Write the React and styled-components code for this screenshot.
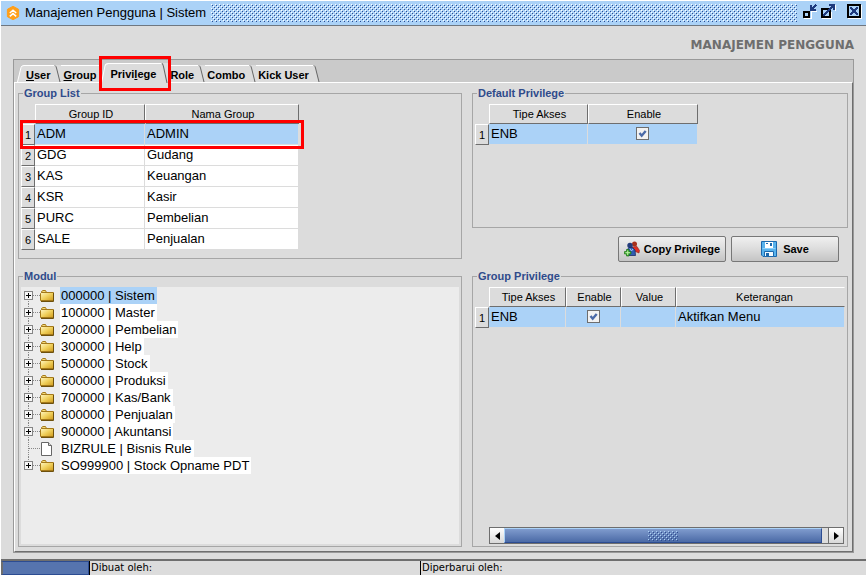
import { useState } from "react";
import styled, { createGlobalStyle, css } from "styled-components";

const groups = [
  { id: "ADM", name: "ADMIN" },
  { id: "GDG", name: "Gudang" },
  { id: "KAS", name: "Keuangan" },
  { id: "KSR", name: "Kasir" },
  { id: "PURC", name: "Pembelian" },
  { id: "SALE", name: "Penjualan" },
];

const modules = [
  { label: "000000 | Sistem" },
  { label: "100000 | Master" },
  { label: "200000 | Pembelian" },
  { label: "300000 | Help" },
  { label: "500000 | Stock" },
  { label: "600000 | Produksi" },
  { label: "700000 | Kas/Bank" },
  { label: "800000 | Penjualan" },
  { label: "900000 | Akuntansi" },
  { label: "BIZRULE | Bisnis Rule", leaf: true },
  { label: "SO999900 | Stock Opname PDT" },
];

// mnemonic = index of the underlined letter
const tabs = [
  { label: "User", mnemonic: 0 },
  { label: "Group", mnemonic: 0 },
  { label: "Privilege", mnemonic: 5 },
  { label: "Role" },
  { label: "Combo" },
  { label: "Kick User" },
];

const AppIcon = () => (
  <svg width="14" height="14" viewBox="0 0 14 14" aria-hidden="true">
    <path d="M7 0.3 12.6 3.3V10.7L7 13.7 1.4 10.7V3.3Z" fill="#ff9f1a" stroke="#ff9f1a" strokeLinejoin="round" />
    <path d="M3.8 7 7 4.2 10.2 7M3.8 10.4 7 7.6 10.2 10.4" fill="none" stroke="#fff" strokeWidth="1.5" />
  </svg>
);

const MinimizeIcon = () => (
  <svg width="15" height="18" shapeRendering="crispEdges" aria-hidden="true">
    <path d="M1 14.500H8.500V8M8 7.500H14" fill="none" stroke="#fff" />
    <rect x="1" y="8" width="5" height="5" fill="#abd2f7" stroke="#000" strokeWidth="2" />
    <path d="M7 1H9V3H10V2H11V1H12V0H13V1H14V2H13V3H12V4H11V5H13V7H7Z" fill="#1f3a7d" />
  </svg>
);

const MaximizeIcon = () => (
  <svg width="15" height="18" shapeRendering="crispEdges" aria-hidden="true">
    <path d="M1 14.500H10.500V8M14.500 1V7" fill="none" stroke="#fff" />
    <rect x="1" y="5" width="8" height="8" fill="#abd2f7" stroke="#000" strokeWidth="2" />
    <path
      d="M8 0H14V6H12V4H11V5H10V6H9V7H8V8H7V9H6V10H5V11H4V12H2V10H3V9H4V8H5V7H6V6H7V5H8V4H9V3H10V2H8Z"
      fill="#1f3a7d"
    />
  </svg>
);

const CloseIcon = () => (
  <svg width="15" height="18" shapeRendering="crispEdges" aria-hidden="true">
    <path d="M1 14.500H14.500V1" fill="none" stroke="#fff" />
    <rect x="1" y="1" width="12" height="12" fill="#abd2f7" stroke="#000" strokeWidth="2" />
    <path
      d="M3 3H5V4H6V5H8V4H9V3H11V5H10V6H9V8H10V9H11V11H9V10H8V9H6V10H5V11H3V9H4V8H5V6H4V5H3Z"
      fill="#1f3a7d"
    />
  </svg>
);

const FolderIcon = () => (
  <svg width="14" height="12" viewBox="0 0 14 12" aria-hidden="true">
    <defs>
      <linearGradient id="folder" x1="0" y1="0" x2="1" y2="1">
        <stop offset="0" stopColor="#fff7c4" />
        <stop offset="0.5" stopColor="#f0d05c" />
        <stop offset="1" stopColor="#cf9a1c" />
      </linearGradient>
    </defs>
    <path d="M1.500 3V1.500L3 0.500H5.500L6.500 2.500" fill="#f5dc7a" stroke="#a4791a" />
    <path d="M0.500 3.500 1.500 2.500H13.500V10.500H0.500Z" fill="url(#folder)" stroke="#a4791a" />
    <path d="M1 11.500H13.500V3" fill="none" stroke="#6d500c" />
  </svg>
);

const FileIcon = () => (
  <svg width="14" height="14" viewBox="0 0 14 14" aria-hidden="true">
    <path d="M1.500 0.500H8.500L11.500 3.500V13.500H1.500Z" fill="#fff" stroke="#666" />
    <path d="M8.500 0.500V3.500H11.500" fill="#ddd" stroke="#666" />
  </svg>
);

const UsersIcon = () => (
  <svg width="16" height="16" viewBox="0 0 16 16" aria-hidden="true">
    <circle cx="10.500" cy="3" r="2.500" fill="#a8301c" />
    <path d="M8 6 13 5.500 15.500 9.500 15 12 10 10Z" fill="#e02f24" stroke="#8c1f18" strokeWidth="0.600" />
    <circle cx="6" cy="4.500" r="2.700" fill="#243d7c" />
    <path d="M3 9 5 6.500H8.500L11 9 11.500 14.500H5Z" fill="#2f5cb4" stroke="#1b2e66" strokeWidth="0.800" />
    <path d="M6 7.500 7.500 10 9 8" fill="none" stroke="#a9c6f2" />
    <path d="M2.500 8.500H5V10.500H7V13H5V15H2.500V13H0.500V10.500H2.500Z" fill="#3fb032" stroke="#23761a" strokeWidth="0.700" />
    <path d="M3.700 9.500V14M1.500 11.700H6" stroke="#bdf0a8" />
  </svg>
);

const SaveIcon = () => (
  <svg width="16" height="16" viewBox="0 0 16 16" aria-hidden="true">
    <path d="M0.500 0.500H15.500V15.500H2L0.500 14Z" fill="#58b2ec" stroke="#1c69ad" />
    <path d="M4 1H12V7H4Z" fill="#fff" />
    <path d="M5 2.500H7" stroke="#1c69ad" />
    <path d="M9 2H11V5H9Z" fill="#1c69ad" />
    <path d="M1.500 7.500H14.500" stroke="#8fd0fb" />
    <path d="M3.500 10.500H12.500V15.500H3.500Z" fill="#f2faff" stroke="#1c69ad" />
    <path d="M5 12H8V15H5Z" fill="#1c69ad" />
  </svg>
);

const Branch = ({ first, last, leaf }) => (
  <svg width="20" height="17" shapeRendering="crispEdges" aria-hidden="true">
    <path
      d={`M4.500 ${first ? 8 : 0}V${last ? 8 : 17}M5 8.500H17`}
      fill="none"
      stroke="#888"
      strokeDasharray="1 1"
    />
    {!leaf && (
      <>
        <rect x="0.500" y="4.500" width="8" height="8" fill="#f6f6f6" stroke="#858585" />
        <path d="M2 8.500H7M4.500 6V11" stroke="#000" />
      </>
    )}
  </svg>
);

const LeftEdge = () => (
  <svg width="7" height="100%" viewBox="0 0 7 17" preserveAspectRatio="none" aria-hidden="true">
    <path d="M0 17 4 2 7 0V17Z" fill="#dcdcdc" />
    <path d="M0.500 17 4 2.500Q4.500 0.500 7 0.500" fill="none" stroke="#fff" />
  </svg>
);

const RightEdge = ({ last }) => (
  <svg width="7" height="100%" viewBox="0 0 7 17" preserveAspectRatio="none" aria-hidden="true">
    <path d={last ? "M0 0 2 1 6 17H0Z" : "M0 0H7V17H0Z"} fill="#dcdcdc" />
    <path d="M1 0.500Q2 1 2.500 3L6 17" fill="none" stroke="#666" />
  </svg>
);

const Checkbox = ({ label }) => (
  <CheckWrap>
    <CheckInput type="checkbox" defaultChecked aria-label={label} />
    <CheckMark viewBox="0 0 13 13" aria-hidden="true">
      <path d="M3.500 6 5.700 8.700 9.700 4" fill="none" stroke="#4a6aa8" strokeWidth="2.400" />
    </CheckMark>
  </CheckWrap>
);

const TabLabel = ({ label, mnemonic }) =>
  mnemonic === undefined ? (
    label
  ) : (
    <>
      {label.slice(0, mnemonic)}
      <u>{label[mnemonic]}</u>
      {label.slice(mnemonic + 1)}
    </>
  );

const App = () => {
  const [group, setGroup] = useState("ADM");
  const [module, setModule] = useState(modules[0].label);
  const selectedTab = 2;

  return (
    <Window>
      <GlobalStyle />
      <TitleBar>
        <AppIcon />
        <Title>Manajemen Pengguna | Sistem</Title>
        <Bumps />
        <WindowButtons>
          <WindowButton aria-label="Minimize"><MinimizeIcon /></WindowButton>
          <WindowButton aria-label="Maximize"><MaximizeIcon /></WindowButton>
          <WindowButton aria-label="Close" $spaced><CloseIcon /></WindowButton>
        </WindowButtons>
      </TitleBar>

      <Body>
        <Heading>MANAJEMEN PENGGUNA</Heading>
        <TabPane>
          <TabStrip role="tablist">
            {tabs.map((tab, i) => {
              const selected = i === selectedTab;
              return (
                <Tab key={tab.label} role="tab" aria-selected={selected} $selected={selected}>
                  {(i === 0 || selected) && <LeftEdge />}
                  <TabText $selected={selected}>
                    <span><TabLabel {...tab} /></span>
                  </TabText>
                  {i + 1 !== selectedTab && <RightEdge last={i === tabs.length - 1} />}
                  {selected && <TabHighlight />}
                </Tab>
              );
            })}
          </TabStrip>

          <Panel role="tabpanel">
            <Column>
              <Group $basis="172px">
                <Legend>Group List</Legend>
                <Table $width="278px">
                  <colgroup>
                    <Col $width="14px" />
                    <Col $width="110px" />
                    <Col $width="154px" />
                  </colgroup>
                  <thead>
                    <tr>
                      <td />
                      <HeadCell>Group ID</HeadCell>
                      <HeadCell>Nama Group</HeadCell>
                    </tr>
                  </thead>
                  <tbody>
                    {groups.map((item, i) => (
                      <Row key={item.id} $selected={item.id === group} onClick={() => setGroup(item.id)}>
                        <RowNumber>
                          {i + 1}
                          {i === 0 && <RowHighlight />}
                        </RowNumber>
                        <Cell>{item.id}</Cell>
                        <Cell>{item.name}</Cell>
                      </Row>
                    ))}
                  </tbody>
                </Table>
              </Group>

              <Group $grow>
                <Legend>Modul</Legend>
                <Tree role="tree">
                  {modules.map((item, i) => (
                    <TreeItem key={item.label} role="treeitem" aria-selected={item.label === module}>
                      <Toggle aria-label={`Expand ${item.label}`}>
                        <Branch first={i === 0} last={i === modules.length - 1} leaf={item.leaf} />
                      </Toggle>
                      {item.leaf ? <FileIcon /> : <FolderIcon />}
                      <TreeLabel $selected={item.label === module} onClick={() => setModule(item.label)}>
                        {item.label}
                      </TreeLabel>
                    </TreeItem>
                  ))}
                </Tree>
              </Group>
            </Column>

            <Column $right>
              <Group $basis="141px">
                <Legend>Default Privilege</Legend>
                <Table $width="223px">
                  <colgroup>
                    <Col $width="14px" />
                    <Col $width="99px" />
                    <Col $width="110px" />
                  </colgroup>
                  <thead>
                    <tr>
                      <td />
                      <HeadCell>Tipe Akses</HeadCell>
                      <HeadCell>Enable</HeadCell>
                    </tr>
                  </thead>
                  <tbody>
                    <Row $selected>
                      <RowNumber>1</RowNumber>
                      <Cell>ENB</Cell>
                      <Cell $center><Checkbox label="Enable ENB" /></Cell>
                    </Row>
                  </tbody>
                </Table>
              </Group>

              <Actions>
                <ActionButton $gap="4px"><UsersIcon />Copy Privilege</ActionButton>
                <ActionButton $gap="6px"><SaveIcon />Save</ActionButton>
              </Actions>

              <Group $grow>
                <Legend>Group Privilege</Legend>
                <Table $width="100%">
                  <colgroup>
                    <Col $width="14px" />
                    <Col $width="77px" />
                    <Col $width="55px" />
                    <Col $width="55px" />
                    <col />
                  </colgroup>
                  <thead>
                    <tr>
                      <td />
                      <HeadCell>Tipe Akses</HeadCell>
                      <HeadCell>Enable</HeadCell>
                      <HeadCell>Value</HeadCell>
                      <HeadCell $open>Keterangan</HeadCell>
                    </tr>
                  </thead>
                  <tbody>
                    <Row $selected>
                      <RowNumber>1</RowNumber>
                      <Cell>ENB</Cell>
                      <Cell $center><Checkbox label="Enable Aktifkan Menu" /></Cell>
                      <Cell />
                      <Cell>Aktifkan Menu</Cell>
                    </Row>
                  </tbody>
                </Table>
                <ScrollBar>
                  <ScrollButton aria-label="Scroll left">
                    <svg width="5" height="8" aria-hidden="true"><path d="M5 0V8L0 4Z" /></svg>
                  </ScrollButton>
                  <Track>
                    <Thumb><ThumbBumps /></Thumb>
                  </Track>
                  <ScrollButton aria-label="Scroll right">
                    <svg width="5" height="8" aria-hidden="true"><path d="M0 0V8L5 4Z" /></svg>
                  </ScrollButton>
                </ScrollBar>
              </Group>
            </Column>
          </Panel>
        </TabPane>
      </Body>

      <StatusBar>
        <Progress />
        <StatusText>Dibuat oleh:</StatusText>
        <StatusText>Diperbarui oleh:</StatusText>
      </StatusBar>
    </Window>
  );
};

const GlobalStyle = createGlobalStyle`
  * {
    box-sizing: border-box;
  }

  body {
    margin: 0;
    background: #fff;
    color: #000;
    font: 11px "Liberation Sans", Arial, sans-serif;
  }

  button {
    margin: 0;
    padding: 0;
    border: 0;
    background: none;
    color: inherit;
    font: inherit;
  }

  svg {
    display: block;
    flex: none;
  }
`;

// two dots per 4px tile, each with a light pixel up and left of it
const bumps = (light, dark) => css`
  background-image:
    conic-gradient(at 1px 1px, transparent 75%, ${light} 0),
    conic-gradient(at 1px 1px, transparent 75%, ${light} 0),
    conic-gradient(at 1px 1px, transparent 75%, ${dark} 0),
    conic-gradient(at 1px 1px, transparent 75%, ${dark} 0);
  background-size: 4px 4px;
  background-position: 0 0, 2px 2px, 1px 1px, 3px 3px;
`;

const Window = styled.div`
  display: flex;
  flex-direction: column;
  min-height: 100vh;
  padding: 1px 0 2px 1px;
`;

const TitleBar = styled.header`
  display: flex;
  align-items: center;
  height: 25px;
  padding: 0 4px 0 5px;
  background: #abd2f7;
  border-bottom: 1px solid #6f7780;
`;

const Title = styled.h1`
  margin: 0 5px;
  font-size: 13px;
  font-weight: normal;
  line-height: 18px;
  white-space: nowrap;
`;

const Bumps = styled.div`
  flex: 1;
  height: 18px;
  ${bumps("#fff", "#2c4c92")}
`;

const WindowButtons = styled.div`
  display: flex;
  gap: 3px;
  margin-left: 6px;
`;

const WindowButton = styled.button`
  margin-left: ${(props) => (props.$spaced ? "8px" : "0")};
`;

const Body = styled.main`
  display: flex;
  flex: 1;
  flex-direction: column;
  padding: 10px 12px 6px;
  background: #dcdcdc;
`;

const Heading = styled.h2`
  margin: 0 0 4px;
  color: #6e6e6e;
  font: bold 12px/19px "DejaVu Sans", Verdana, sans-serif;
  text-align: right;
`;

const TabPane = styled.section`
  display: flex;
  flex: 1;
  flex-direction: column;
  border: 1px solid #999;
`;

const TabStrip = styled.div`
  display: flex;
  align-items: flex-end;
  height: 22px;
  padding-left: 3px;
  background: #cacaca;
`;

const Tab = styled.button`
  position: relative;
  display: flex;
  height: ${(props) => (props.$selected ? "20px" : "17px")};
  margin-bottom: ${(props) => (props.$selected ? "-1px" : "0")};
  z-index: ${(props) => (props.$selected ? 1 : 0)};
  font-weight: bold;
`;

const TabText = styled.span`
  height: 100%;
  padding: ${(props) => (props.$selected ? "3px 5px 0 3px" : "2px 4px 0 2px")};
  border-top: 1px solid #fff;
  background: #dcdcdc;
  line-height: 14px;
  white-space: nowrap;
`;

const TabHighlight = styled.span`
  position: absolute;
  inset: -7px -3px -8px -2px;
  border: 3px solid #f00;
`;

const Panel = styled.div`
  display: grid;
  flex: 1;
  grid-template-columns: 444fr 376fr;
  gap: 10px;
  padding: 4px 4px 4px 3px;
  background: #dcdcdc;
  border: 1px solid #fff;
  border-right-color: #6e6e6e;
  border-bottom-color: #6e6e6e;
`;

const Column = styled.div`
  display: flex;
  flex-direction: column;
  gap: ${(props) => (props.$right ? "8px" : "11px")};
  min-width: 0;
`;

const Group = styled.fieldset`
  display: flex;
  flex: ${(props) => (props.$grow ? "1 0 auto" : "none")};
  flex-direction: column;
  min-width: 0;
  min-height: ${(props) => props.$basis || "auto"};
  margin: 0;
  padding: 4px 2px 2px;
  border: 1px solid #a6a6a6;
`;

const Legend = styled.legend`
  margin-left: 2px;
  padding: 0 1px;
  color: #2f4b8b;
  font-weight: bold;
  line-height: 13px;
`;

const Table = styled.table`
  width: ${(props) => props.$width};
  border-spacing: 0;
  table-layout: fixed;

  td,
  th {
    padding: 0;
  }
`;

const Col = styled.col`
  width: ${(props) => props.$width};
`;

const HeadCell = styled.th.attrs({ scope: "col" })`
  height: 20px;
  border: 1px solid #fff;
  border-right-color: ${(props) => (props.$open ? "transparent" : "#6e6e6e")};
  border-bottom-color: #6e6e6e;
  font-weight: normal;
  line-height: 18px;
  text-indent: ${(props) => (props.$open ? "8px" : "2px")};
`;

const Cell = styled.td`
  height: 21px;
  border-right: 1px solid #dcdcdc;
  border-bottom: 1px solid #dcdcdc;
  font-size: 13px;
  line-height: 20px;
  text-indent: 2px;
  white-space: nowrap;
  ${(props) =>
    props.$center &&
    css`
      padding-bottom: 2px !important;
      text-indent: 0;
    `}
`;

const RowNumber = styled.th.attrs({ scope: "row" })`
  position: relative;
  border: 1px solid #fff;
  border-right-color: #6e6e6e;
  border-bottom-color: #6e6e6e;
  font-weight: normal;
`;

const Row = styled.tr`
  ${Cell} {
    background: ${(props) => (props.$selected ? "#abd2f7" : "#fff")};
  }
`;

const RowHighlight = styled.span`
  position: absolute;
  z-index: 1;
  top: -5px;
  left: -2px;
  width: 284px;
  height: 29px;
  border: 3px solid #f00;
  pointer-events: none;
`;

const CheckWrap = styled.span`
  display: grid;
  justify-content: center;
`;

const CheckInput = styled.input`
  grid-area: 1 / 1;
  width: 13px;
  height: 13px;
  margin: 0;
  appearance: none;
  background: #f2f2f2;
  border: 1px solid #6e6e6e;
`;

const CheckMark = styled.svg`
  grid-area: 1 / 1;
  width: 13px;
  height: 13px;
  pointer-events: none;

  ${CheckInput}:not(:checked) + & {
    display: none;
  }
`;

const Tree = styled.ul`
  flex: 1;
  margin: 0;
  padding: 0 3px;
  background: #ececec;
  list-style: none;
`;

const TreeItem = styled.li`
  display: flex;
  align-items: center;
  height: 17px;
`;

const Toggle = styled.button`
  flex: none;
  margin-right: -4px;
`;

const TreeLabel = styled.span`
  margin-left: 6px;
  padding: 0 2px 0 1px;
  background: ${(props) => (props.$selected ? "#abd2f7" : "#fff")};
  font-size: 13px;
  line-height: 17px;
  white-space: nowrap;
`;

const Actions = styled.div`
  display: flex;
  justify-content: flex-end;
  gap: 5px;
  padding-right: 9px;
`;

const ActionButton = styled.button`
  display: flex;
  align-items: center;
  justify-content: center;
  gap: ${(props) => props.$gap};
  width: 108px;
  height: 26px;
  background: linear-gradient(#f0f0f0, #dcdcdc 50%, #c4c4c4);
  border: 1px solid #777;
  border-radius: 2px;
  font-weight: bold;
  white-space: nowrap;
`;

const ScrollBar = styled.div`
  display: flex;
  height: 17px;
  margin: auto 1px 0 14px;
  border: 1px solid #6e6e6e;
`;

const ScrollButton = styled.button`
  display: grid;
  flex: none;
  place-content: center;
  width: 14px;
  background: linear-gradient(#fff, #d8d8d8);
`;

const Track = styled.div`
  flex: 1;
  padding-right: 6px;
  border-right: 1px solid #6e6e6e;
`;

const Thumb = styled.div`
  display: grid;
  height: 100%;
  place-content: center;
  background: linear-gradient(#7f9bcd, #4b6aa6);
  border: 1px solid #2c4c92;
  border-top-color: #abd2f7;
  border-left-color: #abd2f7;
`;

const ThumbBumps = styled.div`
  width: 30px;
  height: 10px;
  ${bumps("#abd2f7", "#2c4c92")}
`;

const StatusBar = styled.footer`
  display: grid;
  grid-template-columns: 88px 331fr 446fr;
  height: 16px;
  background: #dcdcdc;
  border-top: 2px solid #6e6e6e;
  font: 10px/14px "DejaVu Sans", Verdana, sans-serif;
`;

const Progress = styled.div`
  background: #5674ae;
  border: 1px solid #2c4c92;
  border-left: 2px solid #6e6e6e;
`;

const StatusText = styled.span`
  padding-left: 1px;
  border-left: 1px solid #000;
`;

export default App;
